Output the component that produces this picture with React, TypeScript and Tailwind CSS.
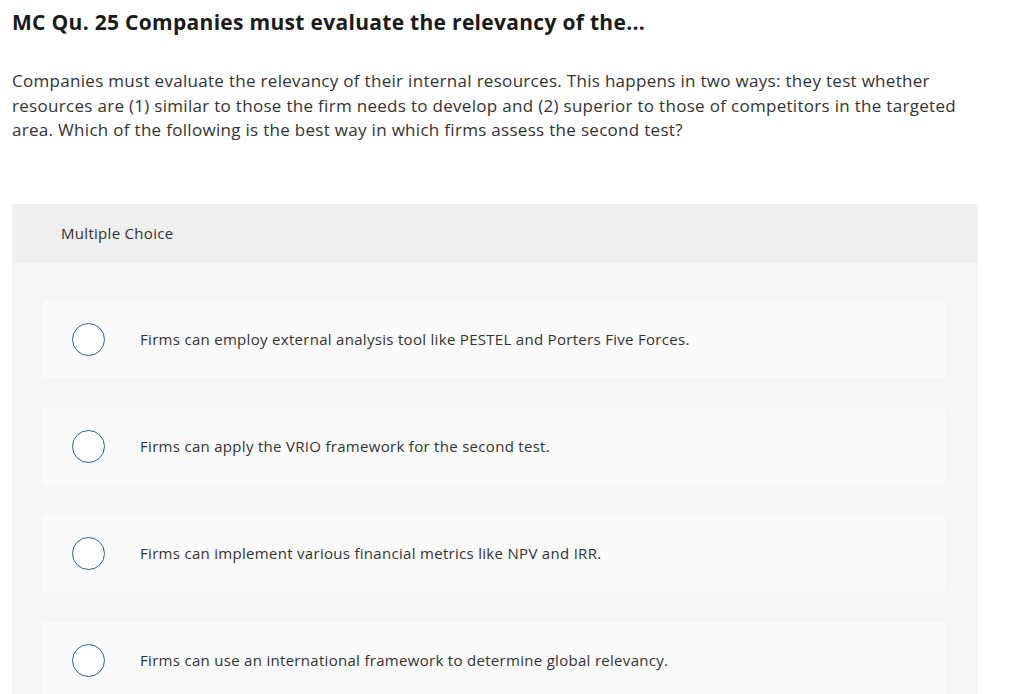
const options = [
  "Firms can employ external analysis tool like PESTEL and Porters Five Forces.",
  "Firms can apply the VRIO framework for the second test.",
  "Firms can implement various financial metrics like NPV and IRR.",
  "Firms can use an international framework to determine global relevancy.",
];

export default function App() {
  return (
    <div className="h-[694px] overflow-hidden bg-white pl-3 pt-[7px] font-['Open_Sans',sans-serif] tracking-[0.3px] text-[#333]">
      <h1 className="text-[21px] font-bold leading-[30px] text-[#1a1a1a]">
        MC Qu. 25 Companies must evaluate the relevancy of the...
      </h1>
      <p className="mt-[32px] text-[17px] leading-[24.5px] text-[#333]">
        Companies must evaluate the relevancy of their internal resources. This happens in two ways: they test whether
        <br />
        resources are (1) similar to those the firm needs to develop and (2) superior to those of competitors in the targeted
        <br />
        area. Which of the following is the best way in which firms assess the second test?
      </p>

      <section className="mt-[61px] w-[966px] rounded-t-[3px] bg-[#f5f5f5]">
        <div className="flex h-[59px] items-center rounded-t-[3px] bg-[#efefef] pl-[49px] text-[15px] text-[#333]">
          Multiple Choice
        </div>
        <div className="flex flex-col gap-[30px] pl-[30px] pr-[33px] pt-[38px] pb-[30px]">
          {options.map((option) => (
            <label
              key={option}
              className="flex h-[77px] items-center rounded-[4px] bg-[#fafafa] pl-[30px]"
            >
              <span className="h-[33px] w-[33px] shrink-0 rounded-full border-[1.5px] border-[#2f5f98] bg-white" />
              <span className="ml-[35px] text-[15px] text-[#333]">{option}</span>
            </label>
          ))}
        </div>
      </section>
    </div>
  );
}
